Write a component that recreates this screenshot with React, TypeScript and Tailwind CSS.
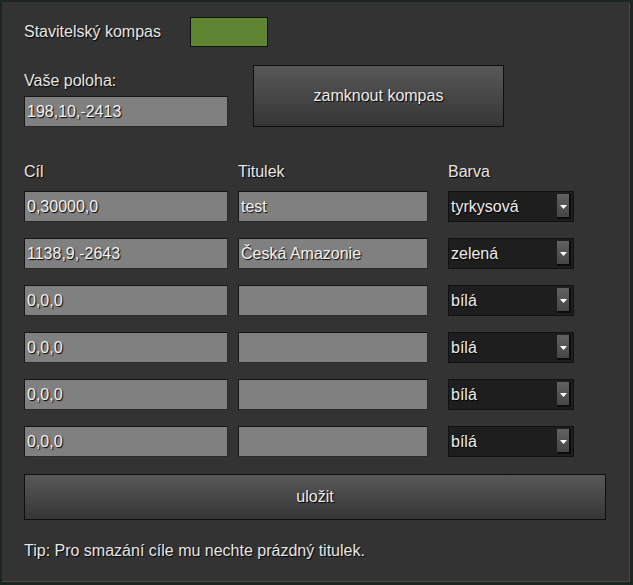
const font = { fontFamily: '"Liberation Sans", Arial, sans-serif' };

const targets = [
  { pos: "0,30000,0", title: "test", color: "tyrkysová" },
  { pos: "1138,9,-2643", title: "Česká Amazonie", color: "zelená" },
  { pos: "0,0,0", title: "", color: "bílá" },
  { pos: "0,0,0", title: "", color: "bílá" },
  { pos: "0,0,0", title: "", color: "bílá" },
  { pos: "0,0,0", title: "", color: "bílá" },
];

function Field({ value, width }: { value: string; width: string }) {
  return (
    <div
      className={`${width} h-[31px] flex items-center pl-[2px] bg-[#808080] border border-[#161616] border-b-[#2a2a2a] border-r-[#2a2a2a] text-[16px] text-[#f2f2f2] [text-shadow:1px_1px_1px_#000] whitespace-nowrap overflow-hidden`}
    >
      {value}
    </div>
  );
}

function Select({ value }: { value: string }) {
  return (
    <div className="w-[126px] h-[31px] flex items-center justify-between pl-[2px] pr-[2px] bg-[#1e1e1e] border border-[#111] text-[16px] text-[#ececec] [text-shadow:1px_1px_1px_#000]">
      <span>{value}</span>
      <div className="w-[14px] h-[25px] flex flex-col items-center justify-center pt-[2px] bg-gradient-to-b from-[#626262] to-[#454545] border-r-2 border-b-2 border-[#0c0c0c]">
        <svg width="7" height="4" viewBox="0 0 7 4">
          <path d="M0 0h7L3.5 4z" fill="#fff" />
        </svg>
      </div>
    </div>
  );
}

function Button({ label, className }: { label: string; className: string }) {
  return (
    <button
      className={`${className} flex items-center justify-center bg-gradient-to-b from-[#585858] to-[#363636] border border-[#0e0e0e] text-[16px] text-[#ececec] [text-shadow:1px_1px_1px_#000]`}
    >
      {label}
    </button>
  );
}

export default function App() {
  return (
    <div className="w-[633px] h-[585px] bg-[#1c2620] pt-[2px] pl-[2px]" style={font}>
      <div className="w-[628px] h-[580px] bg-[#333333] border-r border-b border-[#4a4a4a] rounded-tr-[3px] pl-[22px] pt-[15px] text-[16px] text-[#e6e6e6] [text-shadow:1px_1px_1px_#000]">
        <div className="flex items-center h-[30px]">
          <span className="w-[166px]">Stavitelský kompas</span>
          <div className="w-[78px] h-[30px] bg-[#5f8532] border border-[#111]" />
        </div>

        <div className="flex items-end gap-[25px] mt-[18px]">
          <div className="flex flex-col w-[204px]">
            <span className="leading-[18px] mb-[6px]">Vaše poloha:</span>
            <Field value="198,10,-2413" width="w-[204px]" />
          </div>
          <Button label="zamknout kompas" className="w-[251px] h-[62px]" />
        </div>

        <div className="flex mt-[36px] leading-[18px]">
          <span className="w-[214px]">Cíl</span>
          <span className="w-[210px]">Titulek</span>
          <span>Barva</span>
        </div>

        <div className="flex flex-col gap-[16px] mt-[10px]">
          {targets.map((t, i) => (
            <div key={i} className="flex items-center">
              <Field value={t.pos} width="w-[204px]" />
              <div className="ml-[10px]">
                <Field value={t.title} width="w-[190px]" />
              </div>
              <div className="ml-[20px]">
                <Select value={t.color} />
              </div>
            </div>
          ))}
        </div>

        <Button label="uložit" className="w-[582px] h-[46px] mt-[17px]" />

        <p className="mt-[22px] leading-[18px]">Tip: Pro smazání cíle mu nechte prázdný titulek.</p>
      </div>
    </div>
  );
}
